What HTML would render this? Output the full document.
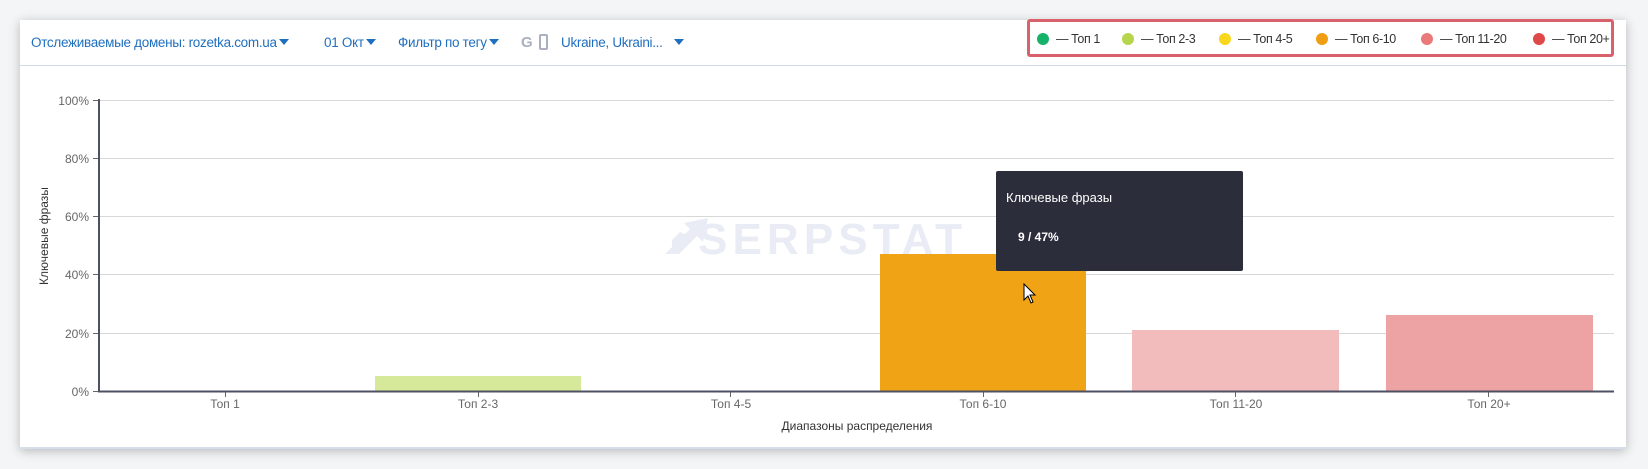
<!DOCTYPE html>
<html><head><meta charset="utf-8"><style>
body{margin:0;width:1648px;height:469px;background:#f4f5f7;font-family:"Liberation Sans",sans-serif;position:relative;overflow:hidden}
.card{position:absolute;left:20px;top:20px;width:1606px;height:427px;background:#fff;box-shadow:0 2px 10px rgba(0,0,0,.25);border-bottom:2px solid #d5deea}
.hdr{position:absolute;left:0;top:0;width:100%;height:45px;border-bottom:1px solid #cfd8e6}
.f{position:absolute;top:15px;color:#1f6fbf;font-size:13.5px;white-space:nowrap;letter-spacing:-0.3px}
.tri{display:inline-block;width:0;height:0;border-left:5px solid transparent;border-right:5px solid transparent;border-top:6px solid #1f6fbf;margin-left:2px;vertical-align:2px}
.leg{position:absolute;left:1007px;top:-1px;width:587px;height:38px;border:3px solid #d9616b;border-radius:3px;box-sizing:border-box}
.li{position:absolute;top:10px;font-size:12.5px;letter-spacing:-0.4px;color:#333;white-space:nowrap}
.li i{display:inline-block;width:12px;height:12px;border-radius:50%;margin-right:7px;vertical-align:-2px}
.ab{position:absolute}
</style></head><body>
<div class="card">
<div class="hdr">
<div class="f" style="left:11px">Отслеживаемые домены: rozetka.com.ua<span class="tri"></span></div>
<div class="f" style="left:304px">01 Окт<span class="tri"></span></div>
<div class="f" style="left:378px">Фильтр по тегу<span class="tri"></span></div>
<div class="f" style="left:501px;color:#aab0bd;font-weight:bold;font-size:15px;top:14px">G</div>
<div style="position:absolute;left:519px;top:14px;width:9px;height:16px;border:2px solid #aab0bd;border-radius:2px;box-sizing:border-box"></div>
<div class="f" style="left:541px">Ukraine, Ukraini... <span class="tri" style="margin-left:8px"></span></div>
<div class="leg">
<div class="li" style="left:7px"><i style="background:#17b26a"></i>— Топ 1</div>
<div class="li" style="left:92px"><i style="background:#b6d54c"></i>— Топ 2-3</div>
<div class="li" style="left:189px"><i style="background:#f9d71c"></i>— Топ 4-5</div>
<div class="li" style="left:286px"><i style="background:#ef9e14"></i>— Топ 6-10</div>
<div class="li" style="left:391px"><i style="background:#ea7a7a"></i>— Топ 11-20</div>
<div class="li" style="left:503px"><i style="background:#df4848"></i>— Топ 20+</div>
</div>
</div>
</div>
<svg class="ab" style="left:0;top:0" width="1648" height="469">
<g stroke="#d8d8d8" stroke-width="1">
<line x1="99" x2="1614" y1="100.5" y2="100.5"/><line x1="99" x2="1614" y1="158.5" y2="158.5"/><line x1="99" x2="1614" y1="216.5" y2="216.5"/><line x1="99" x2="1614" y1="274.5" y2="274.5"/><line x1="99" x2="1614" y1="333.5" y2="333.5"/>
</g>
<g stroke="#666" stroke-width="1">
<line x1="93" x2="99" y1="100.5" y2="100.5"/><line x1="93" x2="99" y1="158.5" y2="158.5"/><line x1="93" x2="99" y1="216.5" y2="216.5"/><line x1="93" x2="99" y1="274.5" y2="274.5"/><line x1="93" x2="99" y1="333.5" y2="333.5"/><line x1="93" x2="99" y1="391.5" y2="391.5"/>
<line x1="225.5" x2="225.5" y1="391" y2="397"/><line x1="478.5" x2="478.5" y1="391" y2="397"/><line x1="730.5" x2="730.5" y1="391" y2="397"/><line x1="983.5" x2="983.5" y1="391" y2="397"/><line x1="1235.5" x2="1235.5" y1="391" y2="397"/><line x1="1488.5" x2="1488.5" y1="391" y2="397"/>
</g>
<g fill="#e9ecf4"><text x="698" y="254" font-family="Liberation Sans" font-size="44" font-weight="bold" letter-spacing="4" textLength="268">SERPSTAT</text>
<path d="M665 254 L690 229 L684 223 L708 218 L703 242 L697 236 L679 254Z M672 240 L680 232 L688 236 L672 248Z"/></g>
<rect x="375" y="376" width="206" height="15" fill="#d6e89a"/>
<rect x="880" y="254" width="206" height="137" fill="#f0a314"/>
<rect x="1132" y="330" width="207" height="61" fill="#f3bcbc"/>
<rect x="1386" y="315" width="207" height="76" fill="#eda3a3"/>
<line x1="99" x2="99" y1="99" y2="392" stroke="#4d5163" stroke-width="2"/>
<line x1="98" x2="1614" y1="391.5" y2="391.5" stroke="#4d5163" stroke-width="2"/>
<g font-family="Liberation Sans" font-size="12" fill="#666" text-anchor="end">
<text x="89" y="105">100%</text><text x="89" y="163">80%</text><text x="89" y="221">60%</text><text x="89" y="279">40%</text><text x="89" y="338">20%</text><text x="89" y="396">0%</text>
</g>
<g font-family="Liberation Sans" font-size="12" fill="#666" text-anchor="middle">
<text x="225" y="408">Топ 1</text><text x="478" y="408">Топ 2-3</text><text x="731" y="408">Топ 4-5</text><text x="983" y="408">Топ 6-10</text><text x="1236" y="408">Топ 11-20</text><text x="1489" y="408">Топ 20+</text>
<text x="857" y="430" fill="#333">Диапазоны распределения</text>
<text transform="translate(48,236) rotate(-90)" fill="#333">Ключевые фразы</text>
</g>
<rect x="996" y="171" width="247" height="100" rx="2" fill="#2b2d3a"/>
<text x="1006" y="202" font-family="Liberation Sans" font-size="13" fill="#fff">Ключевые фразы</text>
<text x="1018" y="241" font-family="Liberation Sans" font-size="12" font-weight="bold" fill="#fff">9 / 47%</text>
<path d="M1024 284 L1024 300 L1028 296 L1031 303 L1033 302 L1030 295 L1035 295Z" fill="#fff" stroke="#000" stroke-width="1"/>
</svg>
</body></html>
